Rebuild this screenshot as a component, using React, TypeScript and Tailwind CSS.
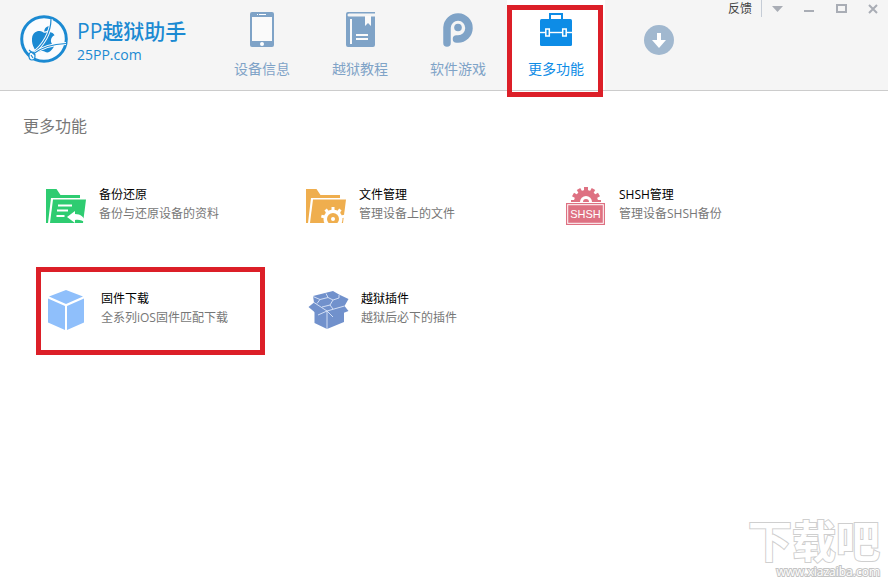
import type { ReactNode } from "react";
import { FaApple } from "react-icons/fa";

const FONT = "font-['Open_Sans','Noto_Sans_CJK_SC',sans-serif]";

function LogoMark() {
  return (
    <svg className="h-12 w-12 shrink-0" viewBox="0 0 48 48" fill="none" aria-hidden="true">
      <circle cx="24" cy="24" r="22.3" fill="#fafcfe" stroke="#1b8ad2" strokeWidth="3" />
      <g transform="translate(8 8) rotate(6 15 15)">
        <FaApple size={31} color="#1b8ad2" />
      </g>
      <path d="M31 4C31 17 24 30 12 39" stroke="#fafcfe" strokeWidth="3.200" />
      <path d="M31 4C31 17 24 30 12 39" stroke="#1b8ad2" strokeWidth="1.200" />
      <path d="M46 28.500C33 29 22 32 13 39" stroke="#fafcfe" strokeWidth="3" />
      <path d="M46 28.500C33 29 22 32 13 39" stroke="#1b8ad2" strokeWidth="1.200" />
      <ellipse cx="12" cy="41" rx="3" ry="4" fill="#fafcfe" stroke="#1b8ad2" strokeWidth="1.200" />
      <path d="M9 35l6 5M11 40l2 3" stroke="#1b8ad2" strokeWidth="1.200" />
    </svg>
  );
}

function PhoneIcon() {
  return (
    <svg className="h-[35px] w-6" viewBox="0 0 24 35" aria-hidden="true">
      <rect width="24" height="35" rx="2" fill="#7fa3c7" />
      <path d="M2 5h20v24H2z" fill="#fafafa" />
      <path d="M7 2h1v1H7zM9 2h7v1H9z" fill="#fff" />
      <circle cx="12" cy="32" r="2" fill="#fff" />
    </svg>
  );
}

function BookIcon() {
  return (
    <svg className="h-[35px] w-[29px]" viewBox="0 0 29 35" aria-hidden="true">
      <path d="M2 0h27v1.500H3a1.500 1.500 0 0 0 0 3h26V33a2 2 0 0 1-2 2H2a2 2 0 0 1-2-2V2a2 2 0 0 1 2-2z" fill="#7fa3c7" />
      <path d="M4 7h2v25H4zM10 22h12v2H10zM10 26h12v2H10zM19 4h6v10l-3-3-3 3z" fill="#fafafa" />
    </svg>
  );
}

function PIcon() {
  return (
    <svg className="h-[35px] w-[30px]" viewBox="0 0 30 35" fill="none" aria-hidden="true">
      <path d="M4 31V15.500A11 11 0 1 1 15 27H13.500" stroke="#7fa3c7" strokeWidth="7.500" strokeLinecap="round" />
      <circle cx="15" cy="15.500" r="3.800" fill="#7fa3c7" />
    </svg>
  );
}

function BriefcaseIcon() {
  return (
    <svg className="h-[35px] w-8" viewBox="0 0 32 35" aria-hidden="true">
      <path d="M10 8V2h12v6" fill="none" stroke="#0d8ce6" strokeWidth="2" />
      <rect y="7" width="32" height="27" rx="1.500" fill="#0d8ce6" />
      <path d="M0 20.500h32" stroke="#fff" strokeWidth="1.400" />
      <rect x="5.800" y="17" width="3.500" height="7" fill="#0d8ce6" stroke="#fff" strokeWidth="1.500" />
      <rect x="22.700" y="17" width="3.500" height="7" fill="#0d8ce6" stroke="#fff" strokeWidth="1.500" />
    </svg>
  );
}

function BackupIcon() {
  return (
    <svg className="h-10 w-[42px]" viewBox="-1 -4 42 40" aria-hidden="true">
      <path d="M0 1h10.500l4 6H34v3H5L2 35H0z" fill="#2ecc71" />
      <path d="M7 11.500h33l-3 23.500H4z" fill="#2ecc71" />
      <path d="M12 17.500h14M11 22.500h11M10.500 28h8" stroke="#fff" strokeWidth="1.800" />
      <path d="M21 29l8-6v3c6 0 9 3 11 9-4-3-7-3.500-11-3v3z" fill="#fff" />
    </svg>
  );
}

function FilesIcon() {
  return (
    <svg className="h-10 w-[42px]" viewBox="-1 -4 42 40" aria-hidden="true">
      <path d="M0 1h10.500l4 6H34v3H5L2 35H0z" fill="#efae4e" />
      <path d="M7 11.500h33l-3 23.500H4z" fill="#efae4e" />
      <g fill="#fff">
        <circle cx="27" cy="31" r="9.500" />
        <path d="M25.500 19h3v6h-3z" />
        <path d="M25.500 19h3v6h-3z" transform="rotate(-38 27 31)" />
        <path d="M25.500 19h3v6h-3z" transform="rotate(38 27 31)" />
        <path d="M25.500 19h3v6h-3z" transform="rotate(-76 27 31)" />
        <path d="M25.500 19h3v6h-3z" transform="rotate(76 27 31)" />
      </g>
      <circle cx="27" cy="31" r="6" fill="#efae4e" />
      <circle cx="27" cy="31" r="2" fill="#fff" />
      <path d="M14 35h26v3H14z" fill="#fff" />
    </svg>
  );
}

function ShshIcon() {
  return (
    <svg className="h-[42px] w-[42px]" viewBox="-1 -3 42 42" aria-hidden="true">
      <g fill="#de7182">
        <path d="M8 16a12 12 0 0 1 24 0z" />
        <path d="M18 1h4v7h-4z" />
        <path d="M18 1h4v7h-4z" transform="rotate(-30 20 16)" />
        <path d="M18 1h4v7h-4z" transform="rotate(30 20 16)" />
        <path d="M18 1h4v7h-4z" transform="rotate(-60 20 16)" />
        <path d="M18 1h4v7h-4z" transform="rotate(60 20 16)" />
        <path d="M5 14h30v2H5z" />
      </g>
      <path d="M14 16a6 6 0 0 1 12 0z" fill="#fff" />
      <path d="M17 16a3 3 0 0 1 6 0z" fill="#de7182" />
      <rect y="17" width="39" height="22" fill="#de7182" />
      <rect x="1.700" y="18.700" width="35.600" height="18.600" fill="none" stroke="#fff" strokeWidth="1" />
      <text x="19.500" y="32" textAnchor="middle" fill="#fff" fontSize="11" className="font-['Liberation_Sans',sans-serif]">SHSH</text>
    </svg>
  );
}

function CubeIcon() {
  return (
    <svg className="h-11 w-11" viewBox="-2 -3 44 44" fill="#8fbffb" aria-hidden="true">
      <path d="M19 1l17 6.500-17 7.500L2 7.500zM1 9.500L18 17v24L1 33.500zM37 9.500L20 17v24l17-7.500z" />
    </svg>
  );
}

function OpenBoxIcon() {
  return (
    <svg className="h-11 w-11" viewBox="0 0 44 44" fill="#7191cc" strokeLinejoin="round" aria-hidden="true">
      <path d="M9.500 20L22 25l17-4v15l-17 7-12.500-6z" />
      <path d="M8 10l20-5 6 3.500 9.500 4.500-4 7 4 5L28 31l-6-5-9 3-9.500-8L9 16.500z" />
      <g fill="none" stroke="#dce6f8" strokeWidth="0.900">
        <path d="M9 16.500L22 25l17.500-5M22 25v18M22 25l6 6M13 29l9-4" />
        <path d="M8 10.500l7 3 8-2-2-4M23 11.500l5 2.500 6-2V9M28 14l-3 5 3 4M25 19l-8 2M15 13.500l-3 4" />
      </g>
    </svg>
  );
}

const tabs: { label: string; icon: ReactNode; active?: boolean }[] = [
  { label: "设备信息", icon: <PhoneIcon /> },
  { label: "越狱教程", icon: <BookIcon /> },
  { label: "软件游戏", icon: <PIcon /> },
  { label: "更多功能", icon: <BriefcaseIcon />, active: true },
];

const features: { title: string; note: string; icon: ReactNode; marked?: boolean }[] = [
  { title: "备份还原", note: "备份与还原设备的资料", icon: <BackupIcon /> },
  { title: "文件管理", note: "管理设备上的文件", icon: <FilesIcon /> },
  { title: "SHSH管理", note: "管理设备SHSH备份", icon: <ShshIcon /> },
  { title: "固件下载", note: "全系列iOS固件匹配下载", icon: <CubeIcon />, marked: true },
  { title: "越狱插件", note: "越狱后必下的插件", icon: <OpenBoxIcon /> },
];

function WindowControls() {
  return (
    <div className="ml-auto flex h-[17px] items-center self-start text-[#a9adb5]">
      <button type="button" className="pr-[9px] text-xs leading-4 text-[#444]">反馈</button>
      <button type="button" aria-label="菜单" className="flex h-full w-8 items-center justify-center border-l border-[#c5ccd6]">
        <svg className="h-[6px] w-[11px]" viewBox="0 0 11 6" fill="currentColor"><path d="M0 0h11L5.500 6z" /></svg>
      </button>
      <button type="button" aria-label="最小化" className="flex h-full w-8 items-center justify-center">
        <svg className="h-[10px] w-[10px]" viewBox="0 0 10 10" fill="currentColor"><path d="M0 6h10v2H0z" /></svg>
      </button>
      <button type="button" aria-label="最大化" className="flex h-full w-8 items-center justify-center">
        <svg className="h-[10px] w-[11px]" viewBox="0 0 11 10" fill="none" stroke="currentColor" strokeWidth="2"><path d="M1 1h9v7H1z" /></svg>
      </button>
      <button type="button" aria-label="关闭" className="flex h-full w-[31px] items-center justify-center">
        <svg className="h-[10px] w-[10px]" viewBox="0 0 10 10" fill="none" stroke="currentColor" strokeWidth="2"><path d="M1 1l8 8M9 1L1 9" /></svg>
      </button>
    </div>
  );
}

export default function App() {
  return (
    <div className={`relative min-h-screen bg-white ${FONT}`}>
      <header className="flex h-[91px] border-b border-[#ccc] bg-[#f5f5f5]">
        <div className="flex w-[213px] shrink-0 gap-[9px] pt-[15px] pl-5 text-[#1b8ad2]">
          <LogoMark />
          <div className="pt-[2px]">
            <p className="text-[21px] leading-7 font-medium whitespace-nowrap">PP越狱助手</p>
            <p className="text-sm leading-5">25PP.com</p>
          </div>
        </div>
        <nav className="flex shrink-0">
          {tabs.map((tab) => (
            <button
              key={tab.label}
              type="button"
              className={`relative flex w-[98px] flex-col items-center gap-3 pt-3 ${tab.active ? "bg-white text-[#0d8ce6]" : "text-[#7fa3c7]"}`}
            >
              {tab.icon}
              <span className="text-sm leading-5">{tab.label}</span>
              {tab.active && <span className="absolute top-[5px] left-0 h-[92px] w-24 border-5 border-[#dc1f28]" />}
            </button>
          ))}
        </nav>
        <button type="button" aria-label="下载" className="mt-[25px] ml-[39px] h-[30px] w-[30px] shrink-0 self-start rounded-full bg-[#a1b8cf]">
          <svg viewBox="0 0 30 30" fill="#fff"><path d="M13 8h4v7h5l-7 8-7-8h5z" /></svg>
        </button>
        <WindowControls />
      </header>

      <main>
        <h1 className="pt-[23px] pl-[23px] text-base leading-6 text-[#777]">更多功能</h1>
        <ul className="grid grid-cols-3 gap-y-4 pt-[22px] pr-[63px] pl-[45px]">
          {features.map((item) => (
            <li key={item.title} className="relative flex h-[88px] items-center">
              <button type="button" className="flex items-center gap-3 text-left text-xs">
                {item.icon}
                <span className="flex flex-col leading-[19px] whitespace-nowrap">
                  <span className="text-black">{item.title}</span>
                  <span className="text-[#777]">{item.note}</span>
                </span>
              </button>
              {item.marked && <span className="pointer-events-none absolute top-[3px] -left-[9px] h-[88px] w-[229px] border-5 border-[#dc1f28]" />}
            </li>
          ))}
        </ul>
      </main>

      <div className="absolute right-2 bottom-[2px] text-right text-white [paint-order:stroke_fill]">
        <p className="text-[44px] leading-[48px] font-bold [-webkit-text-stroke:2px_#cfcfcf]">下载吧</p>
        <p className="text-xs leading-[14px] [-webkit-text-stroke:2px_#c4c4c4]">www.xiazaiba.com</p>
      </div>
    </div>
  );
}
